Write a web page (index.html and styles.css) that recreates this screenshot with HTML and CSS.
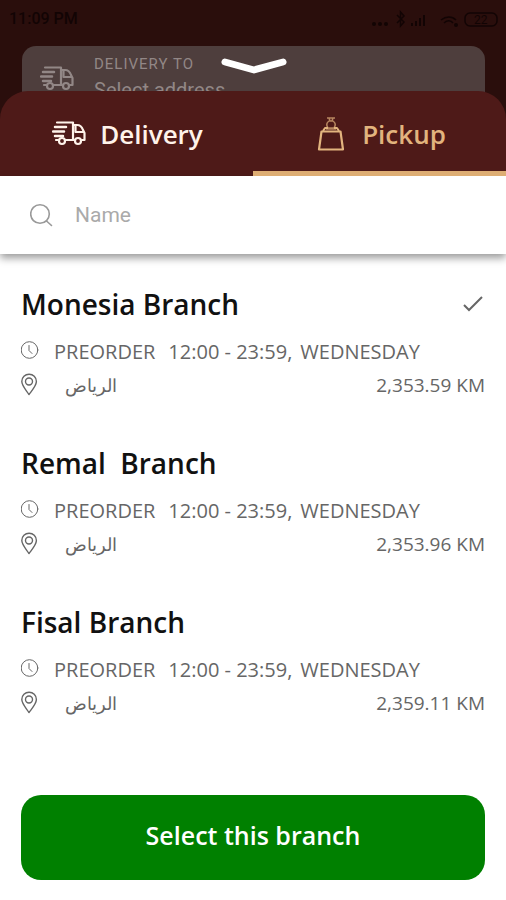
FILE: index.html
```
<!DOCTYPE html>
<html lang="en">
<head>
<meta charset="utf-8">
<meta name="viewport" content="width=device-width, initial-scale=1">
<title>Select a branch</title>
<link rel="stylesheet" href="styles.css">
</head>
<body>
<svg class="defs" aria-hidden="true">
  <symbol id="truck" viewBox="0 0 34 25">
    <g fill="none" stroke="currentColor" stroke-width="2.200" stroke-linecap="round" stroke-linejoin="round">
      <path d="M5 1.500h16v17M21 4h4c3 0 5 2 6 5l1.500 3v7H30M23.500 5v6h7M14 19h8M4 19h2"/>
      <path d="M3 6h11M1 10.500h11M3 15h8" stroke-width="2.500"/>
      <circle cx="10" cy="20" r="3"/>
      <circle cx="26" cy="20" r="3"/>
    </g>
  </symbol>
  <symbol id="clock" viewBox="0 0 20 20">
    <g fill="none" stroke="currentColor" stroke-linecap="round" stroke-linejoin="round">
      <circle cx="8.500" cy="9" r="8.300"/>
      <path d="M8 4.500v5l3 3"/>
    </g>
  </symbol>
  <symbol id="pin" viewBox="0 0 20 24">
    <g fill="none" stroke="currentColor" stroke-width="1.400" stroke-linejoin="round">
      <path d="M8 21.500C5 17 .8 12.500 .8 8.500a7.300 7.300 0 0 1 14.600 0c0 4-4 8.500-7.400 13z"/>
      <circle cx="8" cy="8.500" r="3.500"/>
    </g>
  </symbol>
</svg>

<header class="top">
  <div class="status">
    <span>11:09 PM</span>
    <svg width="128" height="20" viewBox="0 0 128 20" aria-hidden="true">
      <g fill="currentColor">
        <circle cx="4" cy="15" r="2"/><circle cx="10" cy="15" r="2"/><circle cx="16" cy="15" r="2"/>
        <path d="M41 14h2v3h-2zM45 12h2v5h-2zM49 9h2v8h-2zM53 6h2v11h-2z"/>
        <circle cx="86" cy="16" r="2"/>
      </g>
      <g fill="none" stroke="currentColor" stroke-width="1.500">
        <path d="M27 6l7 7-3.500 4V3L34 7l-7 7"/>
        <path d="M71 11c5-4 11-4 15 0M74 14c3-3 7-3 9 0"/>
        <rect x="95" y="4" width="32" height="13" rx="5"/>
      </g>
      <text class="battery" x="104" y="15">22</text>
    </svg>
  </div>
  <div class="address">
    <svg class="truck" aria-hidden="true"><use href="#truck"/></svg>
    <div>
      <div class="address-label">DELIVERY TO</div>
      <div class="address-value">Select address</div>
    </div>
    <button class="collapse" aria-label="Close">
      <svg width="66" height="20" viewBox="0 0 66 20" aria-hidden="true"><path d="M4 6l29 8 29-8" fill="none" stroke="currentColor" stroke-width="7" stroke-linecap="round" stroke-linejoin="round"/></svg>
    </button>
  </div>
</header>

<main class="sheet">
  <nav class="tabs">
    <button class="tab"><svg class="truck" aria-hidden="true"><use href="#truck"/></svg>Delivery</button>
    <button class="tab active">
      <svg class="bag" viewBox="0 0 28 34" aria-hidden="true">
        <g fill="none" stroke="currentColor" stroke-linejoin="round">
          <path stroke-width="2.200" d="M4.500 14.500h19L26 32.500H2z"/>
          <path stroke-width="2" d="M6 14l2-3h3M22 14l-2-3h-3"/>
          <path opacity=".7" stroke-width="1.500" d="M10 1h8M12 1l1 3M16 1l-1 3M12 4h4c3 2 3 4 1 7h-6c-2-3-2-5 1-7zM9 12h10"/>
        </g>
      </svg>Pickup</button>
  </nav>

  <label class="search">
    <svg width="24" height="24" viewBox="0 0 24 24" aria-hidden="true"><g fill="none" stroke="currentColor" stroke-width="1.600" stroke-linecap="round"><circle cx="10" cy="11" r="9.300"/><path d="M16.500 18l5 4.500"/></g></svg>
    <input type="text" placeholder="Name" aria-label="Name">
  </label>

  <ul class="branches">
    <li class="branch">
      <div class="line title"><h2>Monesia Branch</h2>
        <svg class="check" viewBox="0 0 22 18" role="img" aria-label="Selected"><path d="M2 10l5 5L20 2" fill="none" stroke="currentColor" stroke-width="2"/></svg></div>
      <div class="line hours"><svg class="clock" aria-hidden="true"><use href="#clock"/></svg><span>PREORDER</span><span class="time">12:00 - 23:59,</span><span>WEDNESDAY</span></div>
      <div class="line place"><svg class="pin" aria-hidden="true"><use href="#pin"/></svg><span class="city" lang="ar" dir="rtl">الرياض</span><span class="distance">2,353.59 KM</span></div>
    </li>
    <li class="branch">
      <div class="line title"><h2>Remal&nbsp; Branch</h2></div>
      <div class="line hours"><svg class="clock" aria-hidden="true"><use href="#clock"/></svg><span>PREORDER</span><span class="time">12:00 - 23:59,</span><span>WEDNESDAY</span></div>
      <div class="line place"><svg class="pin" aria-hidden="true"><use href="#pin"/></svg><span class="city" lang="ar" dir="rtl">الرياض</span><span class="distance">2,353.96 KM</span></div>
    </li>
    <li class="branch">
      <div class="line title"><h2>Fisal Branch</h2></div>
      <div class="line hours"><svg class="clock" aria-hidden="true"><use href="#clock"/></svg><span>PREORDER</span><span class="time">12:00 - 23:59,</span><span>WEDNESDAY</span></div>
      <div class="line place"><svg class="pin" aria-hidden="true"><use href="#pin"/></svg><span class="city" lang="ar" dir="rtl">الرياض</span><span class="distance">2,359.11 KM</span></div>
    </li>
  </ul>

  <button class="submit">Select this branch</button>
</main>
</body>
</html>
```
FILE: styles.css
```
* {
  box-sizing: border-box;
}

body {
  margin: 0;
  background: #fff;
  color: #666;
  font-family: "Open Sans", "Noto Sans", sans-serif;
}

button {
  border: 0;
  padding: 0;
  background: none;
  color: inherit;
  font: inherit;
}

.defs {
  position: absolute;
  width: 0;
  height: 0;
}

.top {
  padding: 9px 21px 0 22px;
  background: #2a0e0c;
}

.status {
  display: flex;
  justify-content: space-between;
  margin: 0 -13px 17px;
  color: #120404;
  font: 500 16px/20px Roboto, sans-serif;
}

.battery {
  fill: currentColor;
  font: 400 12px Roboto, sans-serif;
}

.address {
  position: relative;
  display: flex;
  gap: 20px;
  padding: 8px 18px 24px;
  border-radius: 14px 14px 0 0;
  background: #4e3e3d;
  color: #928786;
  font-family: Roboto, sans-serif;
}

.address .truck {
  margin-top: 12px;
}

.address-label {
  font-size: 15px;
  line-height: 20px;
  letter-spacing: 1px;
}

.address-value {
  margin-top: 4px;
  font-size: 20px;
  line-height: 24px;
}

.collapse {
  position: absolute;
  top: 10px;
  left: 50%;
  transform: translateX(-50%);
  color: #fff;
  line-height: 0;
}

.truck {
  flex: none;
  width: 34px;
  height: 25px;
}

.sheet {
  position: relative;
  margin-top: -35px;
}

.tabs {
  display: grid;
  grid-template-columns: 1fr 1fr;
  overflow: hidden;
  border-radius: 28px 28px 0 0;
  background: #4e1a18;
}

.tab {
  display: flex;
  align-items: center;
  justify-content: center;
  gap: 14px;
  height: 85px;
  padding: 5px 0 0 2px;
  border-bottom: 5px solid transparent;
  color: #fff3ea;
  font-size: 26px;
  font-weight: 600;
}

.tab.active {
  gap: 17px;
  padding-left: 4px;
  border-color: #deae74;
  color: #e2b47e;
}

.bag {
  width: 28px;
  height: 34px;
}

.search {
  display: flex;
  align-items: center;
  gap: 21px;
  height: 78px;
  padding: 0 30px;
  box-shadow: 0 4px 8px rgba(0, 0, 0, .4);
  color: #999;
}

.search input {
  flex: 1;
  min-width: 0;
  border: 0;
  padding: 0;
  outline: 0;
  background: none;
  font: 21px/28px Roboto, sans-serif;
}

.search input::placeholder {
  color: #aaa;
}

.branches {
  display: grid;
  gap: 43px;
  margin: 0;
  padding: 32px 21px 0;
  list-style: none;
}

.line {
  display: flex;
  align-items: center;
}

.title {
  justify-content: space-between;
  height: 36px;
}

.title h2 {
  margin: 0;
  color: #111;
  font-size: 28px;
  font-weight: 600;
}

.check {
  width: 22px;
  height: 18px;
  margin-right: 1px;
}

.hours {
  height: 34px;
  margin-top: 12px;
  font-size: 20px;
}

.clock {
  width: 20px;
  height: 20px;
  margin-right: 13px;
}

.time {
  margin: 0 8px 0 13px;
}

.place {
  height: 34px;
  font-size: 19px;
}

.pin {
  width: 20px;
  height: 24px;
  margin-right: 24px;
}

.city {
  font-size: 18px;
}

.distance {
  margin-left: auto;
}

.submit {
  display: block;
  width: calc(100% - 42px);
  height: 85px;
  margin: 75px 21px 20px;
  padding-bottom: 5px;
  border-radius: 20px;
  background: #008000;
  color: #fff;
  font-size: 25px;
  font-weight: 600;
}
```
